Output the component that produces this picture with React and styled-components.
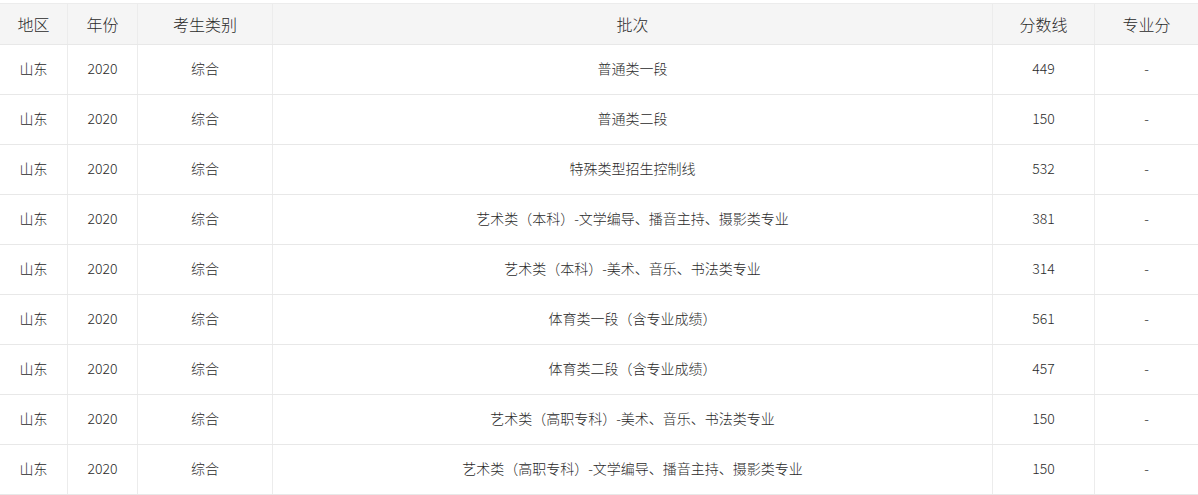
import React from 'react';
import styled, { createGlobalStyle } from 'styled-components';

const Global = createGlobalStyle`
  body { margin: 0; background: #fff; font-family: "Microsoft YaHei", "Noto Sans CJK SC", sans-serif; color: #333; }
`;

const Wrap = styled.div`
  padding-top: 3px; width: 1198px;
`;
const Row = styled.div`
  display: grid; grid-template-columns: 68px 70px 135px 720px 102px 1fr;
  height: ${p => p.$head ? '42px' : '50px'}; box-sizing: border-box;
  border-bottom: 1px solid #e8e8e8;
  border-top: ${p => p.$head ? '1px solid #ececec' : 'none'};
  background: ${p => p.$head ? '#f5f5f5' : '#fff'};
`;
const Cell = styled.div`
  display: flex; align-items: center; justify-content: center;
  border-right: 1px solid #ececec;
  font-size: ${p => p.$head ? '16px' : '14px'};
  padding-bottom: ${p => p.$head ? '1px' : '3px'};
  font-weight: 300;
  color: #2a2a2a;
  text-spacing-trim: space-all;
  &:last-child { border-right: none; }
`;

const heads = ['地区', '年份', '考生类别', '批次', '分数线', '专业分'];
const rows = [
  ['普通类一段', '449'],
  ['普通类二段', '150'],
  ['特殊类型招生控制线', '532'],
  ['艺术类（本科）-文学编导、播音主持、摄影类专业', '381'],
  ['艺术类（本科）-美术、音乐、书法类专业', '314'],
  ['体育类一段（含专业成绩）', '561'],
  ['体育类二段（含专业成绩）', '457'],
  ['艺术类（高职专科）-美术、音乐、书法类专业', '150'],
  ['艺术类（高职专科）-文学编导、播音主持、摄影类专业', '150'],
];

export default function App() {
  return (
    <Wrap>
      <Global />
      <Row $head>
        {heads.map(h => <Cell $head key={h}>{h}</Cell>)}
      </Row>
      {rows.map((r, i) => (
        <Row key={i}>
          <Cell>山东</Cell>
          <Cell>2020</Cell>
          <Cell>综合</Cell>
          <Cell>{r[0]}</Cell>
          <Cell>{r[1]}</Cell>
          <Cell>-</Cell>
        </Row>
      ))}
    </Wrap>
  );
}
